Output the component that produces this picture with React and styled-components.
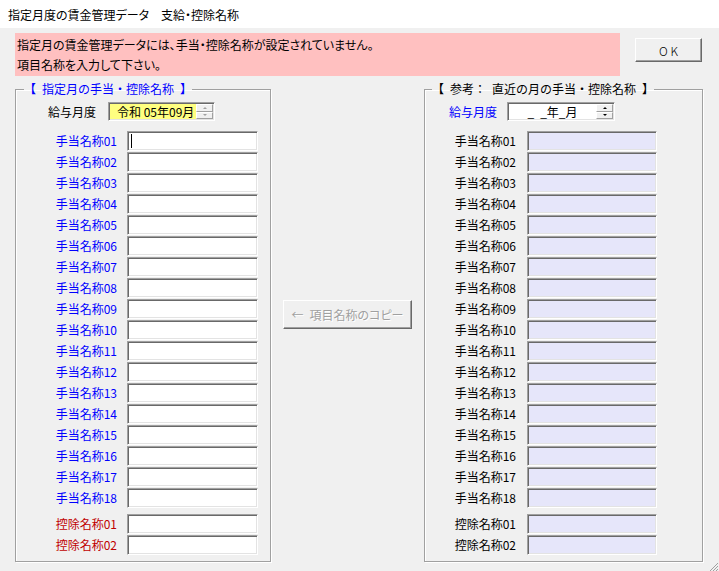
import React from "react";
import styled, { createGlobalStyle } from "styled-components";

const GlobalStyle = createGlobalStyle`
  html, body {
    margin: 0;
    padding: 0;
    background: #f0f0f0;
  }
  body {
    font-family: "Noto Sans CJK JP", "Noto Sans", sans-serif;
    font-size: 12px;
    color: #000;
  }
`;

const Window = styled.div`
  width: 719px;
  height: 571px;
  background: #f0f0f0;
  display: flex;
  flex-direction: column;
  overflow: hidden;
`;

const TitleBar = styled.div`
  height: 28px;
  background: #fff;
  display: flex;
  align-items: center;
  padding-left: 8px;
  font-size: 12px;
  font-feature-settings: "palt";
  white-space: pre;
`;

const TopRow = styled.div`
  display: flex;
  align-items: flex-start;
  padding-left: 15px;
`;

const Banner = styled.div`
  margin-top: 5px;
  width: 605px;
  height: 43px;
  box-sizing: border-box;
  padding: 2px 0 0 2px;
  background: #ffc0c0;
  line-height: 20px;
  font-feature-settings: "palt";
`;

const RaisedButton = styled.button`
  box-sizing: border-box;
  font-family: "Noto Sans CJK JP", "Noto Sans", sans-serif;
  font-size: 12px;
  padding: 0;
  background: #f0f0f0;
  border-style: solid;
  border-width: 1px;
  border-color: #fff #696969 #696969 #fff;
  box-shadow: inset -1px -1px 0 #a0a0a0;
  color: ${(p) => (p.disabled ? "#a0a0a0" : "#000")};
  text-shadow: ${(p) => (p.disabled ? "1px 1px 0 #fff" : "none")};
  white-space: pre;
  cursor: default;
`;

const OkButton = styled(RaisedButton)`
  margin: 10px 0 0 15px;
  width: 67px;
  height: 24px;
  font-weight: 300;
`;

const MainRow = styled.div`
  display: flex;
  padding-left: 15px;
  margin-top: 5px;
  height: 481px;
`;

const Group = styled.fieldset`
  box-sizing: border-box;
  margin: 0;
  padding: 0;
  min-width: 0;
  width: ${(p) => p.$width}px;
  height: 481px;
  border: 1px solid #a0a0a0;
  box-shadow: 1px 1px 0 #fff, inset 1px 1px 0 #fff;
  display: flex;
  flex-direction: column;
`;

const Legend = styled.legend`
  margin-left: ${(p) => p.$offset}px;
  padding: 0;
  font-size: 12px;
  line-height: 16px;
  white-space: pre;
  color: ${(p) => p.$color};
`;

const MonthRow = styled.div`
  display: flex;
  align-items: center;
  margin-top: 5px;
  padding-left: ${(p) => p.$pad}px;
  gap: ${(p) => p.$gap}px;
`;

const MonthLabel = styled.span`
  color: ${(p) => p.$color};
  line-height: 19px;
`;

const Sunken = styled.div`
  box-sizing: border-box;
  display: flex;
  border-style: solid;
  border-width: 1px;
  border-color: #a0a0a0 #fff #fff #a0a0a0;
  box-shadow: inset 1px 1px 0 #696969, inset -1px -1px 0 #e3e3e3;
  padding: 1px;
`;

const MonthField = styled(Sunken)`
  width: ${(p) => p.$width}px;
  height: 19px;
`;

const MonthValue = styled.div`
  flex: 1;
  background: ${(p) => p.$bg};
  line-height: 15px;
  padding-left: ${(p) => p.$pad}px;
  text-align: ${(p) => p.$align};
  white-space: pre;
`;

const Spinner = styled.div`
  width: 17px;
  display: flex;
  flex-direction: column;
`;

const SpinButton = styled.div`
  flex: 1;
  box-sizing: border-box;
  background: #f0f0f0;
  border-style: solid;
  border-width: 1px;
  border-color: #fff #a0a0a0 #a0a0a0 #fff;
  display: flex;
  align-items: center;
  justify-content: center;
`;

const Arrow = styled.span`
  width: 0;
  height: 0;
  border-left: 2px solid transparent;
  border-right: 2px solid transparent;
  ${(p) => (p.$down ? "border-top" : "border-bottom")}: 2px solid ${(p) => p.$color};
`;

const Rows = styled.div`
  display: grid;
  grid-template-columns: ${(p) => p.$label}px ${(p) => p.$box}px;
  column-gap: ${(p) => p.$gap}px;
  row-gap: 1px;
  margin-top: ${(p) => p.$top}px;
`;

const Label = styled.div`
  text-align: right;
  line-height: 20px;
  color: ${(p) => p.$color};
  white-space: nowrap;
`;

const TextBox = styled(Sunken)`
  height: 20px;
  background: ${(p) => p.$bg};
  align-items: center;
  padding-left: 3px;
`;

const Caret = styled.span`
  width: 1px;
  height: 14px;
  background: #000;
`;

const Middle = styled.div`
  width: 153px;
  display: flex;
  justify-content: center;
  padding-top: 219px;
`;

const CopyButton = styled(RaisedButton)`
  width: 129px;
  height: 29px;
  align-self: flex-start;
  font-feature-settings: "palt";
`;

const Footer = styled.div`
  flex: 1;
  display: flex;
  justify-content: flex-end;
  align-items: flex-end;
`;

const allowances = Array.from({ length: 18 }, (_, i) => String(i + 1).padStart(2, "0"));

function MonthSpinner({ color }) {
  return (
    <Spinner>
      <SpinButton>
        <Arrow $color={color} />
      </SpinButton>
      <SpinButton>
        <Arrow $color={color} $down />
      </SpinButton>
    </Spinner>
  );
}

function NameRows({ labelW, boxW, gap, allowanceColor, deductionColor, bg, caret }) {
  return (
    <>
      <Rows $label={labelW} $box={boxW} $gap={gap} $top={10}>
        {allowances.map((n, i) => (
          <React.Fragment key={n}>
            <Label $color={allowanceColor}>手当名称{n}</Label>
            <TextBox $bg={bg}>{caret && i === 0 && <Caret />}</TextBox>
          </React.Fragment>
        ))}
      </Rows>
      <Rows $label={labelW} $box={boxW} $gap={gap} $top={6}>
        {["01", "02"].map((n) => (
          <React.Fragment key={n}>
            <Label $color={deductionColor}>控除名称{n}</Label>
            <TextBox $bg={bg} />
          </React.Fragment>
        ))}
      </Rows>
    </>
  );
}

export default function App() {
  return (
    <>
      <GlobalStyle />
      <Window>
        <TitleBar>{"指定月度の賃金管理データ　支給・控除名称"}</TitleBar>
        <TopRow>
          <Banner>
            <div>指定月の賃金管理データには、手当・控除名称が設定されていません。</div>
            <div>項目名称を入力して下さい。</div>
          </Banner>
          <OkButton>{"O K"}</OkButton>
        </TopRow>
        <MainRow>
          <Group $width={256}>
            <Legend $offset={8} $color="#0000ff">{"【\u2002指定月の手当・控除名称\u2002】"}</Legend>
            <MonthRow $pad={32} $gap={12}>
              <MonthLabel $color="#000">給与月度</MonthLabel>
              <MonthField $width={107}>
                <MonthValue $bg="#ffff80" $pad={7} $align="left">令和 05年09月</MonthValue>
                <MonthSpinner color="#a0a0a0" />
              </MonthField>
            </MonthRow>
            <NameRows
              labelW={101}
              boxW={131}
              gap={10}
              allowanceColor="#0000ff"
              deductionColor="#c00000"
              bg="#fff"
              caret
            />
          </Group>
          <Middle>
            <CopyButton disabled>{"←\u2002項目名称のコピー"}</CopyButton>
          </Middle>
          <Group $width={279}>
            <Legend $offset={7} $color="#000">{"【\u2002参考：\u2002直近の月の手当・控除名称\u2002】"}</Legend>
            <MonthRow $pad={24} $gap={10}>
              <MonthLabel $color="#0000ff">給与月度</MonthLabel>
              <MonthField $width={108}>
                <MonthValue $bg="#fff" $pad={0} $align="center">{"_\u2002_年_月"}</MonthValue>
                <MonthSpinner color="#000" />
              </MonthField>
            </MonthRow>
            <NameRows
              labelW={91}
              boxW={130}
              gap={11}
              allowanceColor="#000"
              deductionColor="#000"
              bg="#e6e6fa"
            />
          </Group>
        </MainRow>
        <Footer>
          <svg width="10" height="9" viewBox="0 0 10 9">
            <path d="M9 1 L1 9 M9 4 L4 9 M9 7 L7 9" stroke="#a0a0a0" strokeWidth="1" />
          </svg>
        </Footer>
      </Window>
    </>
  );
}
